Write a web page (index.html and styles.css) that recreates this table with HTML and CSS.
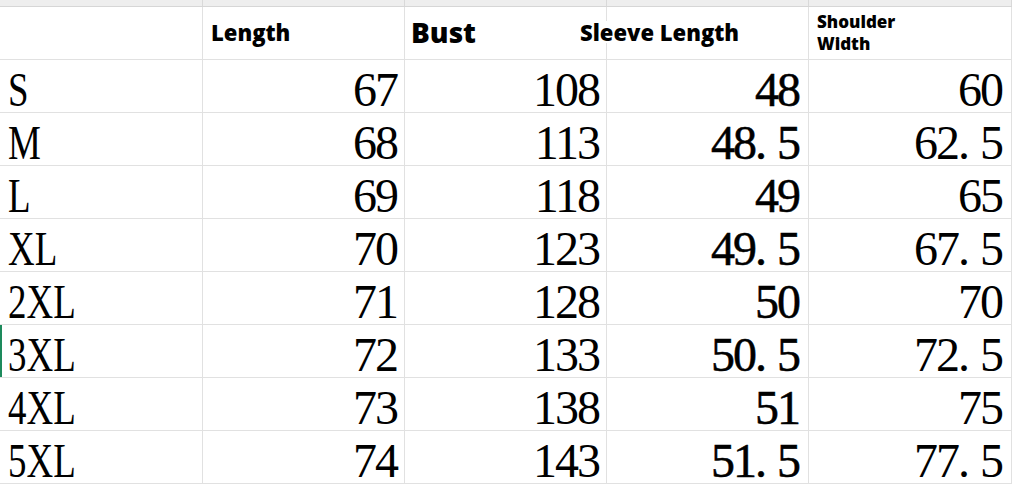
FILE: index.html
```html
<!DOCTYPE html>
<html>
<head>
<meta charset="utf-8">
<link rel="stylesheet" href="styles.css">
</head>
<body>
<div class="sheet">
  <div class="strip">
    <span></span><span></span><span></span><span></span><span></span>
  </div>
  <div class="grid">
    <div class="cell hd"></div>
    <div class="cell hd"><span class="h h-len">Length</span></div>
    <div class="cell hd"><span class="h h-bust">Bust</span></div>
    <div class="cell hd"><span class="h h-sleeve">Sleeve Length</span></div>
    <div class="cell hd"><span class="h h-sh">Shoulder<br>Width</span></div>

    <div class="cell lbl"><span class="t">S</span></div>
    <div class="cell num c2"><span class="n">67</span></div>
    <div class="cell num c3"><span class="n">108</span></div>
    <div class="cell num c4"><span class="n">48</span></div>
    <div class="cell num c5"><span class="n">60</span></div>

    <div class="cell lbl"><span class="t">M</span></div>
    <div class="cell num c2"><span class="n">68</span></div>
    <div class="cell num c3"><span class="n">113</span></div>
    <div class="cell num c4"><span class="n">48<span class="pt">.</span>5</span></div>
    <div class="cell num c5"><span class="n">62<span class="pt">.</span>5</span></div>

    <div class="cell lbl"><span class="t">L</span></div>
    <div class="cell num c2"><span class="n">69</span></div>
    <div class="cell num c3"><span class="n">118</span></div>
    <div class="cell num c4"><span class="n">49</span></div>
    <div class="cell num c5"><span class="n">65</span></div>

    <div class="cell lbl"><span class="t">XL</span></div>
    <div class="cell num c2"><span class="n">70</span></div>
    <div class="cell num c3"><span class="n">123</span></div>
    <div class="cell num c4"><span class="n">49<span class="pt">.</span>5</span></div>
    <div class="cell num c5"><span class="n">67<span class="pt">.</span>5</span></div>

    <div class="cell lbl"><span class="t">2XL</span></div>
    <div class="cell num c2"><span class="n">71</span></div>
    <div class="cell num c3"><span class="n">128</span></div>
    <div class="cell num c4"><span class="n">50</span></div>
    <div class="cell num c5"><span class="n">70</span></div>

    <div class="cell lbl sel"><span class="t">3XL</span></div>
    <div class="cell num c2"><span class="n">72</span></div>
    <div class="cell num c3"><span class="n">133</span></div>
    <div class="cell num c4"><span class="n">50<span class="pt">.</span>5</span></div>
    <div class="cell num c5"><span class="n">72<span class="pt">.</span>5</span></div>

    <div class="cell lbl"><span class="t">4XL</span></div>
    <div class="cell num c2"><span class="n">73</span></div>
    <div class="cell num c3"><span class="n">138</span></div>
    <div class="cell num c4"><span class="n">51</span></div>
    <div class="cell num c5"><span class="n">75</span></div>

    <div class="cell lbl"><span class="t">5XL</span></div>
    <div class="cell num c2"><span class="n">74</span></div>
    <div class="cell num c3"><span class="n">143</span></div>
    <div class="cell num c4"><span class="n">51<span class="pt">.</span>5</span></div>
    <div class="cell num c5"><span class="n">77<span class="pt">.</span>5</span></div>
  </div>
</div>
</body>
</html>
```

FILE: styles.css
```css
html, body {
  margin: 0;
  padding: 0;
  background: #ffffff;
}

.sheet {
  width: 1016px;
  height: 484px;
  overflow: hidden;
  background: #ffffff;
}

.strip {
  display: grid;
  grid-template-columns: 203px 202px 202px 202px 203px;
  height: 7px;
  box-sizing: border-box;
  background: #eeeeee;
  border-bottom: 1px solid #d6d6d6;
  width: 1012px;
}

.strip span {
  border-right: 1px solid #d9d9d9;
}

.grid {
  display: grid;
  grid-template-columns: 203px 202px 202px 202px 203px;
  grid-template-rows: 53px repeat(8, 53px);
  width: 1012px;
}

.cell {
  box-sizing: border-box;
  border-right: 1px solid #e1e1e1;
  border-bottom: 1px solid #e1e1e1;
  min-width: 0;
}

.hd {
  display: flex;
  align-items: flex-start;
  font-family: "Open Sans", "Noto Sans", sans-serif;
  font-weight: 800;
  color: #000000;
}

.h {
  display: block;
  line-height: 1;
  white-space: nowrap;
  background: #ffffff;
}

.h-len {
  font-size: 22px;
  margin: 14px 0 0 8px;
}

.h-bust {
  font-size: 28px;
  margin: 11px 0 0 6px;
}

.h-sleeve {
  font-size: 22px;
  margin: 14px 0 0 -27px;
}

.h-sh {
  font-size: 17px;
  line-height: 22px;
  margin: 4px 0 0 8px;
}

.lbl, .num {
  font-family: "Liberation Serif", "Times New Roman", serif;
  font-size: 48px;
  line-height: 44px;
  color: #000000;
  padding-top: 8px;
  white-space: nowrap;
}

.lbl {
  padding-left: 8px;
}

.lbl .t {
  display: inline-block;
  transform: scaleX(0.77);
  transform-origin: left center;
}

.sel {
  box-shadow: inset 2px 0 0 #1d8a5c;
}

.num {
  text-align: right;
  letter-spacing: -2px;
}

.c2 { padding-right: 7px; }
.c3 { padding-right: 7px; }
.c4 { padding-right: 9px; }
.c5 { padding-right: 9px; }

.c4 .n {
  -webkit-text-stroke: 0.5px #000000;
}

.pt {
  letter-spacing: 10px;
}
```
